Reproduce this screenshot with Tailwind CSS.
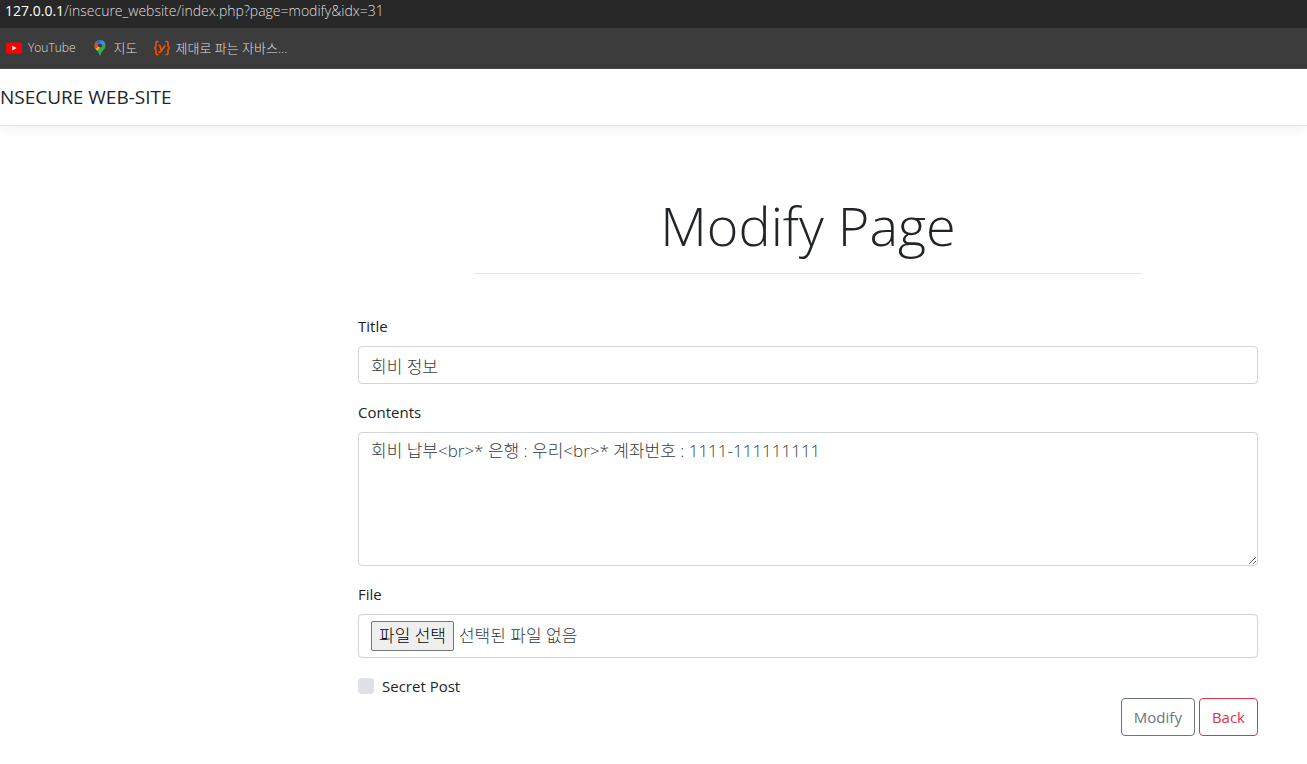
<!DOCTYPE html>
<html lang="ko">
<head>
<meta charset="utf-8">
<meta name="viewport" content="width=device-width, initial-scale=1">
<title>Modify Page</title>
<script src="https://cdn.jsdelivr.net/npm/@tailwindcss/browser@4"></script>
</head>
<body class="bg-white text-[#212529] font-['Open_Sans','Noto_Sans_CJK_KR',sans-serif] text-[15px] leading-6">
  <div class="h-7 bg-[#282828] px-[5px] text-sm leading-[22px] font-light text-[#dedede] whitespace-nowrap"><span class="font-normal text-white">127.0.0.1</span>/insecure_website/index.php?page=modify&amp;idx=31</div>
  <nav aria-label="Bookmarks" class="flex h-[41px] items-center gap-4 border-b border-[#4a4a4a] bg-[#3c3c3c] px-1.5 text-[13px] text-[#dedede] font-light whitespace-nowrap">
    <a href="#" class="flex items-center gap-1.5 text-xs">
      <svg class="size-4" viewBox="0 0 16 16"><rect y="2.4" width="16" height="11.4" rx="2.8" fill="#f00"/><path d="M6.3 5.7v4.800l4.200-2.400z" fill="#fff"/></svg>
      YouTube</a>
    <a href="#" class="flex items-center gap-1.5">
      <svg class="size-4" viewBox="0 0 16 16"><defs><clipPath id="pin"><path d="M8 0a5.500 5.500 0 0 0-5.500 5.500C2.500 7.200 3.100 8.300 4.100 9.600 5.600 11.500 6.900 12.800 7.400 15.100c.2 1 1 1 1.200 0 .5-2.300 1.800-3.600 3.300-5.500 1-1.300 1.600-2.400 1.600-4.100A5.500 5.500 0 0 0 8 0z"/></clipPath></defs><g clip-path="url(#pin)"><path fill="#34a853" d="M0 0h16v16H0z"/><path fill="#fbbc04" d="M0 9.500 8 0v7.500L4.500 11.500 0 14z"/><path fill="#ea4335" d="M0 0h4.200L8 4.500 3.200 9.500 0 8z"/><path fill="#1a73e8" d="M3.700 1.800 6.500 4.300 10 0H2z"/><path fill="#4285f4" d="M6.500 4.200 10.200 0H16v3.500L12 4 8.500 8z"/></g><circle cx="8" cy="5.500" r="2.100" fill="#3c3c3c"/></svg>
      지도</a>
    <a href="#" class="flex items-center gap-1.5">
      <svg class="size-4" viewBox="0 0 16 16" fill="none" stroke="#ff5100" stroke-width="1.500"><path d="M4.500 1.500H3.200q-1.200 0-1.200 1.300v3.400L.6 8l1.400 1.800v3.400q0 1.300 1.200 1.300h1.300M11.500 1.500h1.300q1.200 0 1.200 1.300v3.400L15.400 8 14 9.800v3.400q0 1.300-1.200 1.300h-1.300M4.600 5.500h1.200l1.700 5M11.300 5.300 7.500 10.500q-1.300 2-3.100 2"/></svg>
      제대로 파는 자바스...</a>
  </nav>
  <header class="flex h-[57px] items-center border-b border-[#dee2e6] shadow-[0_4px_12px_rgba(0,0,0,0.05)]">
    <a href="#" class="text-[19px]">NSECURE WEB-SITE</a>
  </header>
  <main class="pl-[358px] pr-[49px] pt-16">
    <div class="mx-auto max-w-[668px] border-b border-[#e5e5e5] pb-3 text-center">
      <h1 class="text-[54px] leading-[71px] font-light">Modify Page</h1>
    </div>
    <form class="pt-10">
      <label for="title" class="mb-2 block">Title</label>
      <input id="title" type="text" value="회비 정보" class="block h-[38px] w-full rounded border border-[#ced4da] px-3 text-[17px] font-light text-[#343a40]">
      <label for="contents" class="mt-4 mb-2 block">Contents</label>
      <textarea id="contents" rows="5" class="block h-[134px] w-full resize-y rounded border border-[#ced4da] px-3 py-1.5 text-[17px] leading-6 font-light text-[#343a40]">회비 납부&lt;br&gt;* 은행 : 우리&lt;br&gt;* 계좌번호 : 1111-111111111</textarea>
      <p class="mt-4 mb-2">File</p>
      <label for="file" class="flex h-11 items-center gap-[5px] rounded border border-[#ced4da] px-3 text-[17px] font-light text-[#343a40]">
        <input id="file" type="file" aria-label="File" class="sr-only">
        <span class="flex h-[30px] items-center rounded-xs border border-[#767676] bg-[#efefef] px-[7px] text-black">파일 선택</span>
        <span>선택된 파일 없음</span>
      </label>
      <div class="mt-4 flex items-center gap-2">
        <input id="secret" type="checkbox" class="size-4 appearance-none rounded bg-[#dee2e6] checked:bg-blue-600">
        <label for="secret">Secret Post</label>
      </div>
      <div class="flex justify-end gap-1">
        <button type="submit" class="h-[38px] rounded border border-[#6c757d] px-3 text-[#6c757d]">Modify</button>
        <button type="button" class="h-[38px] rounded border border-[#dc3545] px-3 text-[#dc3545]">Back</button>
      </div>
    </form>
  </main>
</body>
</html>
